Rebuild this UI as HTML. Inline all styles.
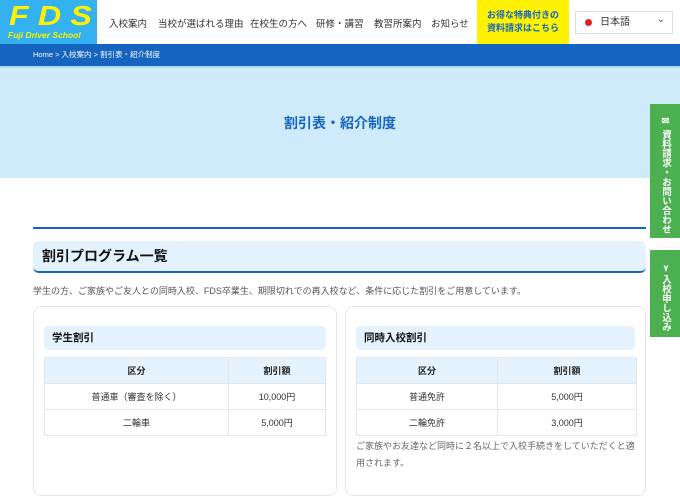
<!DOCTYPE html>
<html><head><meta charset="utf-8"><style>
*{margin:0;padding:0;box-sizing:border-box}
body{width:680px;height:480px;overflow:hidden;background:#fff;font-family:"Liberation Sans","Noto Sans CJK JP",sans-serif;position:relative;color:#333}
.abs{position:absolute}
.logo{left:0;top:0;width:97px;height:44px;background:#33b1f0}
.logo .f{position:absolute;left:9px;top:0px;font-size:28px;font-weight:bold;font-style:italic;color:#fff200;letter-spacing:8px;transform:scaleX(1.15);transform-origin:left}
.logo .s{position:absolute;left:8px;top:30px;font-size:8.5px;font-weight:bold;font-style:italic;color:#fff200}
.nav{top:16px;font-size:9.5px;color:#333}
.yb{left:477px;top:0;width:92px;height:44px;background:#fff200;color:#1565c0;font-size:9px;font-weight:bold;text-align:center;line-height:13px;padding-top:9px}
.lang{left:575px;top:11px;width:98px;height:23px;border:1px solid #ddd;font-size:10px;line-height:21px;padding-left:24px}
.lang:before{content:"";position:absolute;left:9px;top:7px;width:7px;height:7px;border-radius:50%;background:#e02020}
.lang:after{content:"⌄";position:absolute;right:7px;top:-3px;font-size:10px;color:#555}
.bc{left:0;top:44px;width:680px;height:22px;background:#1565c0;color:#fff;font-size:7.5px;line-height:22px;padding-left:33px}
.hero{left:0;top:66px;width:680px;height:112px;background:#cfeafa;border-top:2px solid #a9dcf5}
.hero div{position:absolute;width:100%;top:45px;text-align:center;font-size:14px;font-weight:bold;color:#1565c0}
.line{left:33px;top:227px;width:613px;height:2px;background:#1565c0}
.h2{left:33px;top:241px;width:613px;height:32px;background:#e3f2fd;border-bottom:2px solid #1565c0;border-radius:6px;font-size:14px;font-weight:bold;line-height:30px;padding-left:9px;color:#111}
.p{left:33px;top:284px;font-size:9px;color:#555}
.card{top:306px;height:190px;border:1px solid #e6e6e6;border-radius:8px;background:#fff}
.ch{height:24px;background:#e3f2fd;border-radius:5px;font-size:10.5px;font-weight:bold;line-height:24px;padding-left:8px;color:#111}
table{border-collapse:collapse;font-size:9px}
td,th{border:1px solid #e5e5e5;height:26px;text-align:center}
th{background:#e3f2fd;font-weight:bold;color:#222}
.tab{left:650px;width:30px;background:#4caf50;color:#fff;font-size:9.5px;font-weight:bold;writing-mode:vertical-rl;text-align:center;padding-top:8px;line-height:30px}
</style></head><body>
<div class="abs logo"><div class="f">FDS</div><div class="s">Fuji Driver School</div></div>
<div class="abs nav" style="left:109px">入校案内</div>
<div class="abs nav" style="left:158px">当校が選ばれる理由</div>
<div class="abs nav" style="left:250px">在校生の方へ</div>
<div class="abs nav" style="left:316px">研修・講習</div>
<div class="abs nav" style="left:374px">教習所案内</div>
<div class="abs nav" style="left:431px">お知らせ</div>
<div class="abs yb">お得な特典付きの<br>資料請求はこちら</div>
<div class="abs lang">日本語</div>
<div class="abs bc">Home &gt; 入校案内 &gt; 割引表・紹介制度</div>
<div class="abs hero"><div>割引表・紹介制度</div></div>
<div class="abs line"></div>
<div class="abs h2">割引プログラム一覧</div>
<div class="abs p">学生の方、ご家族やご友人との同時入校、FDS卒業生、期限切れでの再入校など、条件に応じた割引をご用意しています。</div>
<div class="abs card" style="left:33px;width:304px">
<div class="ch" style="margin:19px 10px 7px">学生割引</div>
<table style="margin-left:10px;width:282px"><tr><th style="width:184px">区分</th><th>割引額</th></tr><tr><td>普通車（審査を除く）</td><td>10,000円</td></tr><tr><td>二輪車</td><td>5,000円</td></tr></table>
</div>
<div class="abs card" style="left:345px;width:301px">
<div class="ch" style="margin:19px 10px 7px">同時入校割引</div>
<table style="margin-left:10px;width:281px"><tr><th style="width:141px">区分</th><th>割引額</th></tr><tr><td>普通免許</td><td>5,000円</td></tr><tr><td>二輪免許</td><td>3,000円</td></tr></table>
<div style="margin:2px 10px;font-size:9px;color:#666;line-height:17px">ご家族やお友達など同時に２名以上で入校手続きをしていただくと適用されます。</div>
</div>
<div class="abs tab" style="top:104px;height:134px">✉ 資料請求・お問い合わせ</div>
<div class="abs tab" style="top:250px;height:87px">➢ 入校申し込み</div>
</body></html>
